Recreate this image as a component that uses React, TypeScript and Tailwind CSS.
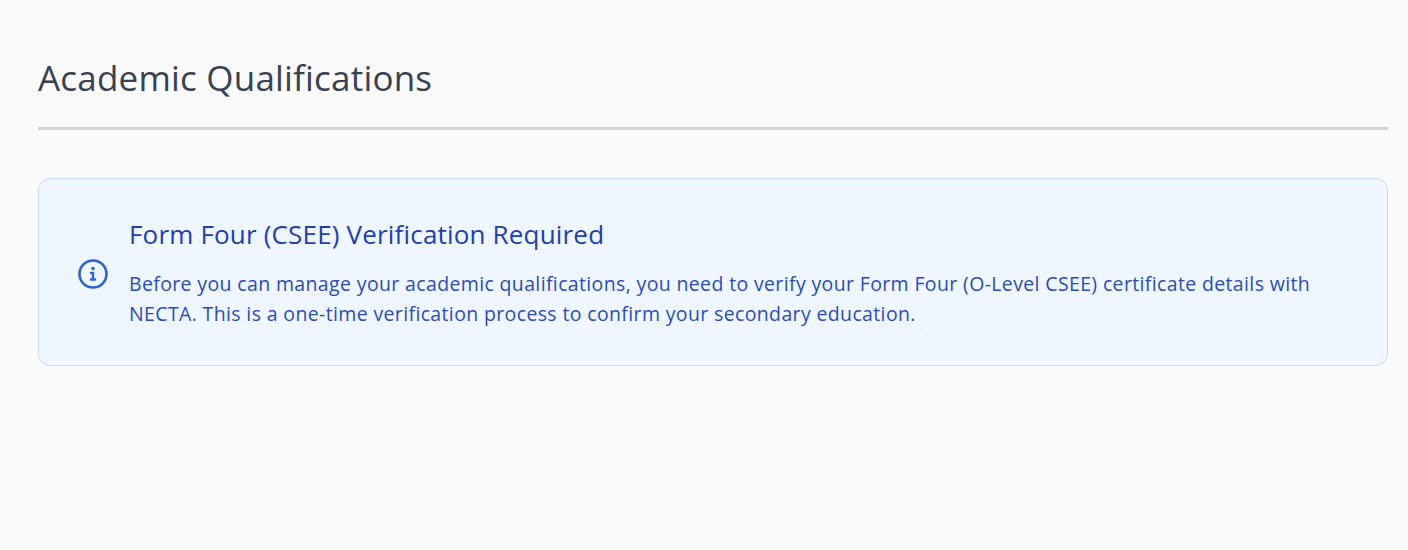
export default function App() {
  return (
    <div className="min-h-[550px] bg-[#fafafa] pl-[38px] pr-5 pt-[50px] font-['Open_Sans',sans-serif]">
      <h1 className="border-b-[3px] border-[#d0d2dc] pb-[21px] text-[35px] leading-[56px] tracking-[0.2px] text-[#374151]">Academic Qualifications</h1>
      <div className="mt-12 flex items-center gap-[21px] rounded-xl border border-[#bfdbfe] bg-[#eff6ff] pb-9 pl-[39px] pr-10 pt-[39px]">
        <svg className="shrink-0" width="30" height="30" viewBox="0 0 30 30" fill="none" stroke="#2b63d9" strokeWidth="2.6" strokeLinecap="round">
          <circle cx="15" cy="15" r="13.5" />
          <path d="M13 14h2v6M13 20.5h4" strokeWidth="2.4" />
          <circle cx="15" cy="9.5" r="1.8" fill="#2b63d9" stroke="none" />
        </svg>
        <div>
          <h2 className="text-[26px] leading-[32px] tracking-[0.18px] text-[#1e40af]">Form Four (CSEE) Verification Required</h2>
          <p className="mt-[19px] text-[19.5px] leading-[30px] tracking-[0.36px] text-[#2a4cb8]">Before you can manage your academic qualifications, you need to verify your Form Four (O-Level CSEE) certificate details with NECTA. This is a one-time verification process to confirm your secondary education.</p>
        </div>
      </div>
    </div>
  )
}
